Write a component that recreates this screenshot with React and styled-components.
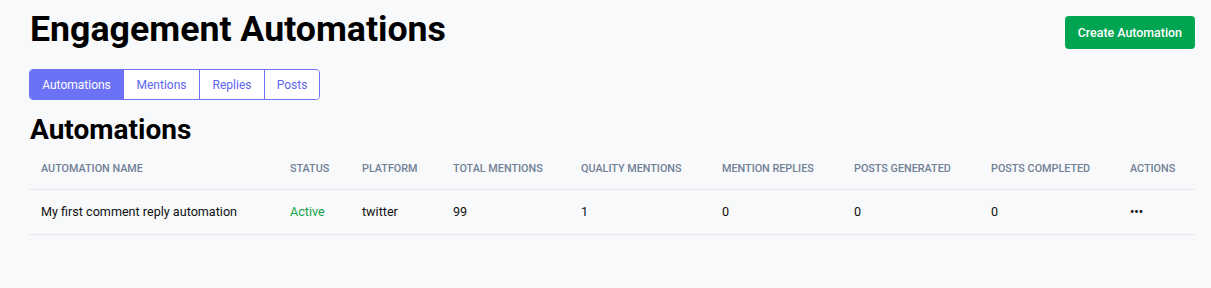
import React from "react";
import styled, { createGlobalStyle } from "styled-components";

const GlobalStyle = createGlobalStyle`
  html, body {
    margin: 0;
    padding: 0;
    background: #f8f9fb;
    font-family: Roboto, "Liberation Sans", Arial, sans-serif;
    color: #000;
  }
  * { box-sizing: border-box; }
`;

const Page = styled.div`
  padding: 8px 16px 40px 29px;
  min-height: 288px;
  background: #f8f9fb;
`;

const Header = styled.div`
  display: flex;
  justify-content: space-between;
  align-items: flex-start;
`;

const Title = styled.h1`
  margin: 0 0 0 1px;
  font-size: 35.7px;
  line-height: 43px;
  font-weight: 700;
  color: #000;
`;

const PrimaryButton = styled.button`
  margin-top: 8px;
  height: 33px;
  padding: 0 13px;
  border: none;
  border-radius: 4px;
  background: #00a551;
  color: #fff;
  font-family: inherit;
  font-size: 12.4px;
  font-weight: 500;
  cursor: pointer;
`;

const TabGroup = styled.div`
  display: inline-flex;
  margin-top: 18px;
  border: 1px solid #6b72f5;
  border-radius: 4px;
  overflow: hidden;
`;

const Tab = styled.button`
  height: 29px;
  width: ${(p) => p.$w}px;
  padding: 0;
  border: none;
  border-left: ${(p) => (p.$first ? "none" : "1px solid #6b72f5")};
  background: ${(p) => (p.$active ? "#6b72f5" : "#fff")};
  color: ${(p) => (p.$active ? "#fff" : "#5e66f0")};
  font-family: inherit;
  font-size: 12px;
  font-weight: 400;
  cursor: pointer;
`;

const SectionTitle = styled.h2`
  margin: 13px 0 0 1px;
  font-size: 28px;
  line-height: 34px;
  font-weight: 700;
  color: #000;
`;

const Table = styled.div`
  margin-top: 3px;
  display: grid;
  grid-template-columns: 249px 72px 91px 128px 141px 132px 137px 139px 1fr;
`;

const HeadCell = styled.div`
  padding: 11px 12px 13px;
  height: 40px;
  line-height: 16px;
  font-size: 10.8px;
  font-weight: 500;
  text-transform: uppercase;
  color: #718096;
  border-bottom: 1px solid #e5e7eb;
  white-space: nowrap;
`;

const Cell = styled.div`
  padding: 12px 12px;
  height: 45px;
  line-height: 20px;
  font-size: 12.6px;
  color: ${(p) => (p.$status ? "#16a34a" : "#111")};
  border-bottom: 1px solid #e5e7eb;
  white-space: nowrap;
`;

const Dots = styled.span`
  font-size: 12px;
  font-weight: 700;
`;

const columns = [
  "Automation Name",
  "Status",
  "Platform",
  "Total Mentions",
  "Quality Mentions",
  "Mention Replies",
  "Posts Generated",
  "Posts Completed",
  "Actions",
];

const rows = [
  {
    name: "My first comment reply automation",
    status: "Active",
    platform: "twitter",
    total: 99,
    quality: 1,
    replies: 0,
    generated: 0,
    completed: 0,
  },
];

const tabs = [
  { label: "Automations", w: 93, active: true },
  { label: "Mentions", w: 76 },
  { label: "Replies", w: 65 },
  { label: "Posts", w: 55 },
];

export default function App() {
  return (
    <>
      <GlobalStyle />
      <Page>
        <Header>
          <Title>Engagement Automations</Title>
          <PrimaryButton>Create Automation</PrimaryButton>
        </Header>
        <TabGroup>
          {tabs.map((t, i) => (
            <Tab key={t.label} $active={t.active} $first={i === 0} $w={t.w}>
              {t.label}
            </Tab>
          ))}
        </TabGroup>
        <SectionTitle>Automations</SectionTitle>
        <Table>
          {columns.map((c) => (
            <HeadCell key={c}>{c}</HeadCell>
          ))}
          {rows.map((r) => (
            <React.Fragment key={r.name}>
              <Cell>{r.name}</Cell>
              <Cell $status>{r.status}</Cell>
              <Cell>{r.platform}</Cell>
              <Cell>{r.total}</Cell>
              <Cell>{r.quality}</Cell>
              <Cell>{r.replies}</Cell>
              <Cell>{r.generated}</Cell>
              <Cell>{r.completed}</Cell>
              <Cell>
                <Dots>•••</Dots>
              </Cell>
            </React.Fragment>
          ))}
        </Table>
      </Page>
    </>
  );
}
